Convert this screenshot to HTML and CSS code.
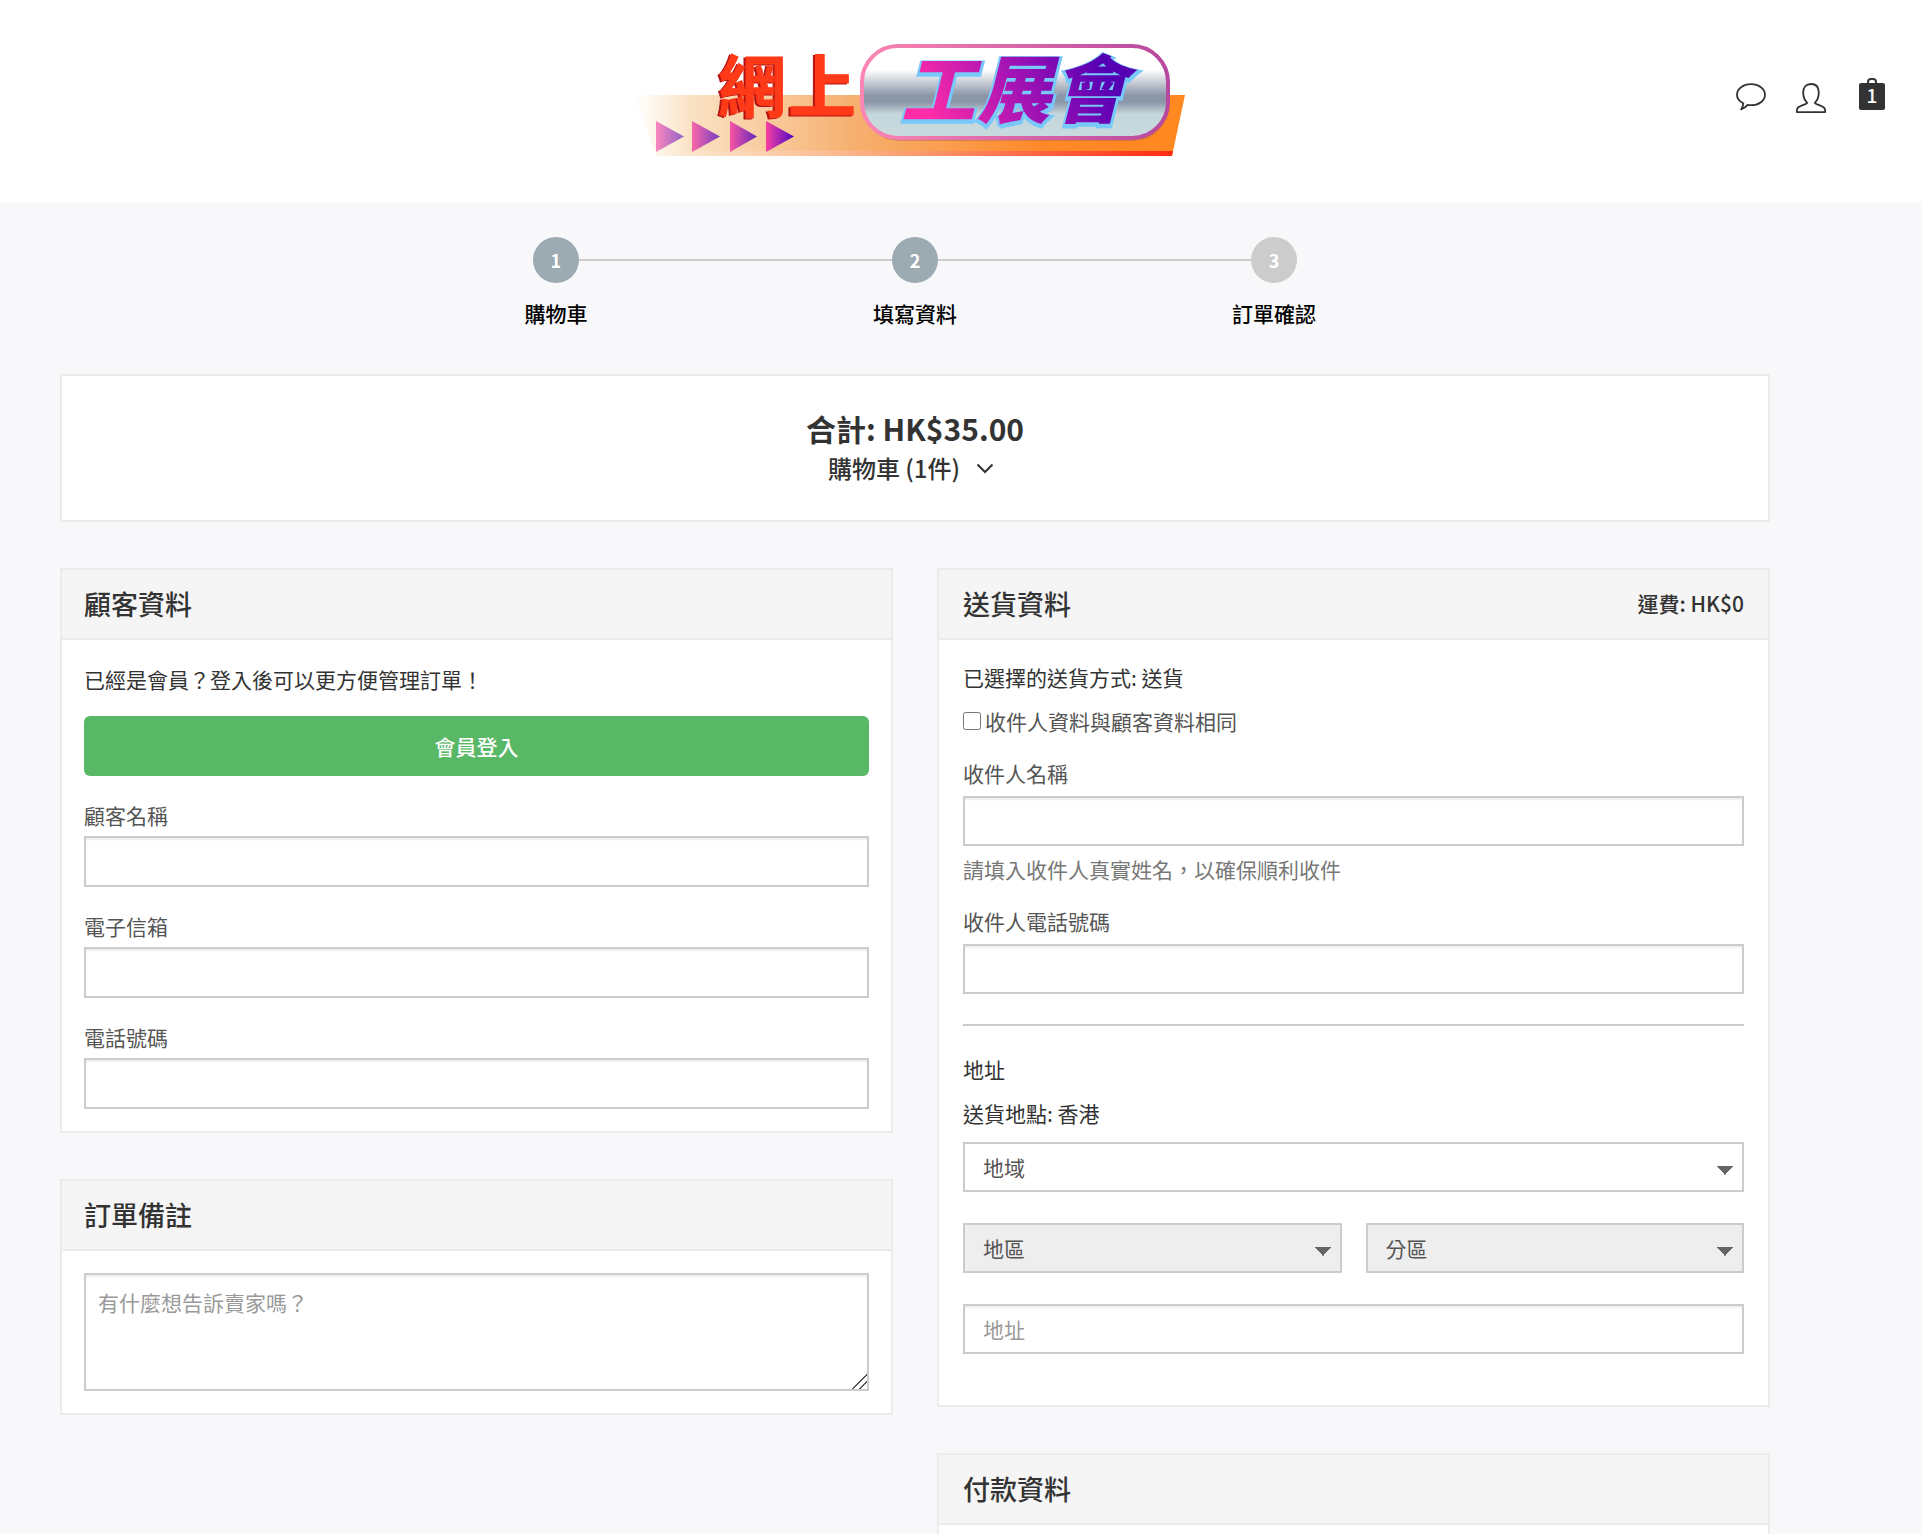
FILE: index.html
```html
<!DOCTYPE html>
<html lang="zh-Hant">
<head>
<meta charset="UTF-8">
<meta name="viewport" content="width=device-width, initial-scale=1.0">
<title>網上工展會 - 結帳</title>
<link rel="stylesheet" href="styles.css">
</head>

<body>
    <header class="header">
        <a class="logo" href="#" aria-label="網上工展會">
            <svg viewBox="0 0 600 160" width="600" height="160">
                <defs>
                    <linearGradient id="banner" x1="0" x2="1" y1="0" y2="0">
                        <stop offset="0" stop-color="#fdecd6" stop-opacity="0"/>
                        <stop offset="0.1" stop-color="#fbe3c6"/>
                        <stop offset="0.4" stop-color="#f6b070"/>
                        <stop offset="0.75" stop-color="#ff8828"/>
                        <stop offset="1" stop-color="#ff8820"/>
                    </linearGradient>
                    <linearGradient id="strip" x1="0" x2="1" y1="0" y2="0">
                        <stop offset="0" stop-color="#fff" stop-opacity="0"/>
                        <stop offset="0.45" stop-color="#fba678"/>
                        <stop offset="1" stop-color="#ff2a12"/>
                    </linearGradient>
                    <linearGradient id="plate" x1="0" x2="0" y1="0" y2="1">
                        <stop offset="0.26" stop-color="#fff"/>
                        <stop offset="0.54" stop-color="#8b96a8"/>
                        <stop offset="0.61" stop-color="#8b96a8"/>
                        <stop offset="0.74" stop-color="#c5d7db"/>
                        <stop offset="1" stop-color="#c8dadd"/>
                    </linearGradient>
                    <linearGradient id="rim" x1="0" x2="1" y1="0" y2="0">
                        <stop offset="0" stop-color="#fb86b3"/>
                        <stop offset="1" stop-color="#b8489f"/>
                    </linearGradient>
                    <linearGradient id="letters" gradientUnits="userSpaceOnUse" x1="320" y1="110" x2="480" y2="30">
                        <stop offset="0" stop-color="#ff2ca8"/>
                        <stop offset="0.5" stop-color="#a814b4"/>
                        <stop offset="1" stop-color="#5600b4"/>
                    </linearGradient>
                    <linearGradient id="arrow" x1="0" x2="1" y1="0" y2="0">
                        <stop offset="0" stop-color="#f93fa0"/>
                        <stop offset="1" stop-color="#4a08c4"/>
                    </linearGradient>
                </defs>
                <path d="M18 75H570L557 136H42Z" fill="url(#banner)"/>
                <path d="M40 131H558L557 136H42Z" fill="url(#strip)"/>
                <path d="M41 101L69 116.500L41 132Z" fill="url(#arrow)" opacity="0.6"/>
                <path d="M77 101L105 116.500L77 132Z" fill="url(#arrow)" opacity="0.75"/>
                <path d="M115 101L142 116.500L115 132Z" fill="url(#arrow)" opacity="0.85"/>
                <path d="M151 101L179 116.500L151 132Z" fill="url(#arrow)"/>
                <rect x="248" y="29" width="306" height="92" rx="36" fill="#8a5a4a" opacity="0.35"/>
                <rect x="247" y="26" width="306" height="92" rx="36" fill="url(#plate)" stroke="url(#rim)" stroke-width="4"/>
                <g class="logo-red">
                    <text x="101" y="93" fill="#b31212" stroke="#b31212">網</text>
                    <text x="171" y="93" fill="#b31212" stroke="#b31212">上</text>
                    <text x="103" y="92" fill="#ff3a18" stroke="#ff3a18">網</text>
                    <text x="173" y="92" fill="#ff3a18" stroke="#ff3a18">上</text>
                </g>
                <g class="logo-purple">
                    <g fill="#78c8fa" stroke="#78c8fa" stroke-width="5">
                        <text x="286" y="99">工</text>
                        <text x="362" y="99">展</text>
                        <text x="437" y="99">會</text>
                    </g>
                    <g fill="url(#letters)">
                        <text x="286" y="97">工</text>
                        <text x="362" y="97">展</text>
                        <text x="437" y="97">會</text>
                    </g>
                </g>
            </svg>
        </a>
        <nav class="actions">
            <button class="icon-btn" aria-label="訊息">
                <svg viewBox="0 0 30 28" width="30" height="28" fill="none" stroke="#333" stroke-width="1.800" stroke-linejoin="round">
                    <path d="M15 1.200C22.800 1.200 29 5.900 29 11.700C29 17.700 22.800 22.200 15 22.200C13.800 22.200 12.700 22.100 11.600 21.900C9.800 24 8 25.400 5.200 26.400C6.400 24.400 7.100 22.500 7.300 20.300C3.600 18.400 1 15.300 1 11.700C1 5.900 7.200 1.200 15 1.200Z"/>
                </svg>
            </button>
            <button class="icon-btn" aria-label="會員">
                <svg viewBox="0 0 30 30" width="30" height="30" fill="none" stroke="#333" stroke-width="1.800" stroke-linejoin="round">
                    <path d="M15 1C10 1 7.200 4.200 7.200 9.500C7.200 14 8.600 17.400 11.200 19.800C9.500 21.600 3.200 23 1.500 25.200C0.900 26.100 0.800 27.500 0.800 28.600Q0.800 29.200 1.400 29.200H28.600Q29.200 29.200 29.200 28.600C29.200 27.500 29.100 26.100 28.500 25.200C26.800 23 20.500 21.600 18.800 19.800C21.400 17.400 22.800 14 22.800 9.500C22.800 4.200 20 1 15 1Z"/>
                </svg>
            </button>
            <button class="icon-btn cart-btn" aria-label="購物車">
                <svg viewBox="0 0 26 32" width="26" height="32">
                    <path d="M9 6V4Q9 1 12 1H14Q17 1 17 4V6" fill="none" stroke="#333" stroke-width="2"/>
                    <rect x="0" y="5" width="26" height="27" rx="2" fill="#333"/>
                </svg>
                <span class="cart-count">1</span>
            </button>
        </nav>
    </header>

    <main class="main">
        <ol class="steps">
            <li class="step done"><span class="step-line"><span class="step-num">1</span></span>購物車</li>
            <li class="step done"><span class="step-line"><span class="step-num">2</span></span>填寫資料</li>
            <li class="step"><span class="step-line"><span class="step-num">3</span></span>訂單確認</li>
        </ol>

        <section class="summary">
            <div class="total">合計: HK$35.00</div>
            <button class="cart-toggle">購物車 (1件)
                <svg viewBox="0 0 18 11" width="18" height="11" fill="none" stroke="#333" stroke-width="2"><path d="M1.500 1.500L9 9L16.500 1.500"/></svg>
            </button>
        </section>

        <div class="columns">
            <div class="column">
                <section class="card">
                    <div class="card-head"><h2>顧客資料</h2></div>
                    <div class="card-body">
                        <p class="login-hint">已經是會員？登入後可以更方便管理訂單！</p>
                        <button class="login-btn">會員登入</button>
                        <div class="field">
                            <label for="customerName">顧客名稱</label>
                            <input type="text" id="customerName" class="control">
                        </div>
                        <div class="field">
                            <label for="customerEmail">電子信箱</label>
                            <input type="email" id="customerEmail" class="control">
                        </div>
                        <div class="field">
                            <label for="customerPhone">電話號碼</label>
                            <input type="tel" id="customerPhone" class="control">
                        </div>
                    </div>
                </section>

                <section class="card">
                    <div class="card-head"><h2>訂單備註</h2></div>
                    <div class="card-body">
                        <textarea class="control notes" aria-label="訂單備註" placeholder="有什麼想告訴賣家嗎？"></textarea>
                    </div>
                </section>
            </div>

            <div class="column">
                <section class="card delivery">
                    <div class="card-head"><h2>送貨資料</h2><span class="fee">運費: HK$0</span></div>
                    <div class="card-body">
                        <p>已選擇的送貨方式: 送貨</p>
                        <label class="check"><input type="checkbox">收件人資料與顧客資料相同</label>
                        <div class="field">
                            <label for="recipientName">收件人名稱</label>
                            <input type="text" id="recipientName" class="control">
                            <p class="help">請填入收件人真實姓名，以確保順利收件</p>
                        </div>
                        <div class="field">
                            <label for="recipientPhone">收件人電話號碼</label>
                            <input type="tel" id="recipientPhone" class="control">
                        </div>
                        <hr>
                        <p>地址</p>
                        <p class="place">送貨地點: 香港</p>
                        <div class="address">
                            <select class="control wide" aria-label="地域"><option>地域</option></select>
                            <select class="control" aria-label="地區" disabled><option>地區</option></select>
                            <select class="control" aria-label="分區" disabled><option>分區</option></select>
                            <input type="text" class="control wide" aria-label="地址" placeholder="地址">
                        </div>
                    </div>
                </section>

                <section class="card delivery">
                    <div class="card-head"><h2>付款資料</h2></div>
                    <div class="card-body"></div>
                </section>
            </div>
        </div>
    </main>
</body>
</html>
```

FILE: styles.css
```css
* {
    box-sizing: border-box;
}
html {
    overflow-x: hidden;
}
body {
    margin: 0;
    font-family: "Noto Sans CJK TC", "Noto Sans", sans-serif;
    font-size: 21px;
    line-height: 30px;
    color: #333;
    background-color: #f8f8fa;
}
button, input, select, textarea {
    font: inherit;
    color: inherit;
}
button {
    border: none;
    background: none;
    padding: 0;
    cursor: pointer;
}
h2, p, ol {
    margin: 0;
    padding: 0;
}

/* header */
.header {
    display: grid;
    grid-template-columns: 32% 600px 1fr;
    padding: 20px 0 22px;
    background-color: #fff;
}
.logo {
    grid-column: 2;
    display: block;
    height: 160px;
}
.logo-red {
    font-size: 68px;
    font-weight: 700;
}
.logo-purple {
    font-size: 74px;
    font-weight: 900;
    font-style: italic;
}
.actions {
    display: flex;
    justify-content: flex-end;
    align-items: flex-start;
    gap: 30px;
    padding: 58px 37px 0 0;
}
.icon-btn {
    display: flex;
    padding-top: 5px;
}
.cart-btn {
    position: relative;
    padding-top: 0;
    margin-left: 3px;
}
.cart-count {
    position: absolute;
    left: 0;
    top: 2px;
    width: 26px;
    text-align: center;
    font-size: 19px;
    font-weight: 500;
    color: #fff;
}

.main {
    padding: 35px 152px 0 60px;
}

/* checkout steps */
.steps {
    display: grid;
    grid-template-columns: repeat(3, 1fr);
    width: 63%;
    margin: 0 auto 46px;
    list-style: none;
    text-align: center;
    font-weight: 500;
    color: #000;
}
.step-line {
    display: flex;
    align-items: center;
    margin-bottom: 15px;
}
.step-line::before, .step-line::after {
    content: "";
    flex: 1;
    height: 2px;
    background-color: #ccc;
}
.step:first-child .step-line::before, .step:last-child .step-line::after {
    background: none;
}
.step-num {
    width: 46px;
    height: 46px;
    line-height: 46px;
    border-radius: 50%;
    background-color: #ccc;
    color: #fff;
    font-size: 18px;
    font-weight: 700;
}
.done .step-num {
    background-color: #9caab1;
}

/* cart summary */
.summary {
    display: flex;
    flex-direction: column;
    align-items: center;
    padding: 32px 0;
    margin-bottom: 46px;
    border: 2px solid #ebebeb;
    background-color: #fff;
    line-height: 40px;
}
.total {
    font-size: 30px;
    font-weight: 700;
}
.cart-toggle {
    display: flex;
    align-items: center;
    gap: 16px;
    padding-right: 8px;
    font-size: 24px;
    font-weight: 500;
    line-height: 40px;
}

/* cards */
.columns {
    display: grid;
    grid-template-columns: 1fr 1fr;
    gap: 44px;
    align-items: start;
}
.column {
    display: grid;
    gap: 46px;
}
.card {
    border: 2px solid #ebebeb;
    background-color: #fff;
}
.card-head {
    display: flex;
    justify-content: space-between;
    padding: 18px 22px;
    border-bottom: 2px solid #ebebeb;
    background-color: #f5f5f5;
}
.card-head h2 {
    font-size: 27px;
    font-weight: 500;
    line-height: 32px;
}
.fee {
    font-weight: 500;
}
.card-body {
    padding: 22px;
}
.login-hint {
    margin: 2px 0 22px;
}
.login-btn {
    display: block;
    width: 100%;
    height: 60px;
    border-radius: 6px;
    background-color: #58b865;
    color: #fff;
    font-weight: 500;
}
.field {
    margin-top: 24px;
}
.field label {
    display: block;
    margin-bottom: 6px;
    color: #555;
}
.control {
    display: block;
    width: 100%;
    height: 51px;
    padding: 0 18px;
    border: 2px solid #ccc;
    border-radius: 0;
    background-color: #fff;
    box-shadow: inset 0 2px 2px rgba(0, 0, 0, 0.07);
    color: #555;
}
.control::placeholder {
    color: #999;
}
.notes {
    height: 118px;
    padding: 12px;
    resize: vertical;
}
.notes::-webkit-resizer {
    background-image: linear-gradient(135deg, transparent 48%, #555 48%, #555 54%, transparent 54%, transparent 72%, #555 72%, #555 78%, transparent 78%);
}
select.control {
    appearance: none;
    box-shadow: none;
    background-image: linear-gradient(to bottom left, #666 50%, transparent 51%), linear-gradient(to bottom right, #666 50%, transparent 51%);
    background-size: 8px 9px;
    background-position: right 17px top 22px, right 9px top 22px;
    background-repeat: no-repeat;
    opacity: 1;
}
select.control:disabled {
    background-color: #eee;
}

/* delivery card */
.delivery .card-head {
    padding: 18px 24px;
}
.delivery .card-body {
    padding: 22px 24px 51px;
}
.delivery .control {
    height: 50px;
}
.delivery .field {
    margin-top: 22px;
}
.delivery .field label {
    margin-bottom: 8px;
}
.check {
    display: flex;
    align-items: center;
    gap: 4px;
    margin-top: 14px;
    color: #555;
}
.check input {
    width: 18px;
    height: 18px;
    margin: 0;
}
.help {
    margin-top: 8px;
    color: #777;
}
hr {
    height: 2px;
    margin: 30px 0 28px;
    border: none;
    background-color: #ccc;
}
.place {
    margin: 14px 0;
}
.address {
    display: grid;
    grid-template-columns: 1fr 1fr;
    gap: 31px 24px;
}
.wide {
    grid-column: 1 / 3;
}
```
